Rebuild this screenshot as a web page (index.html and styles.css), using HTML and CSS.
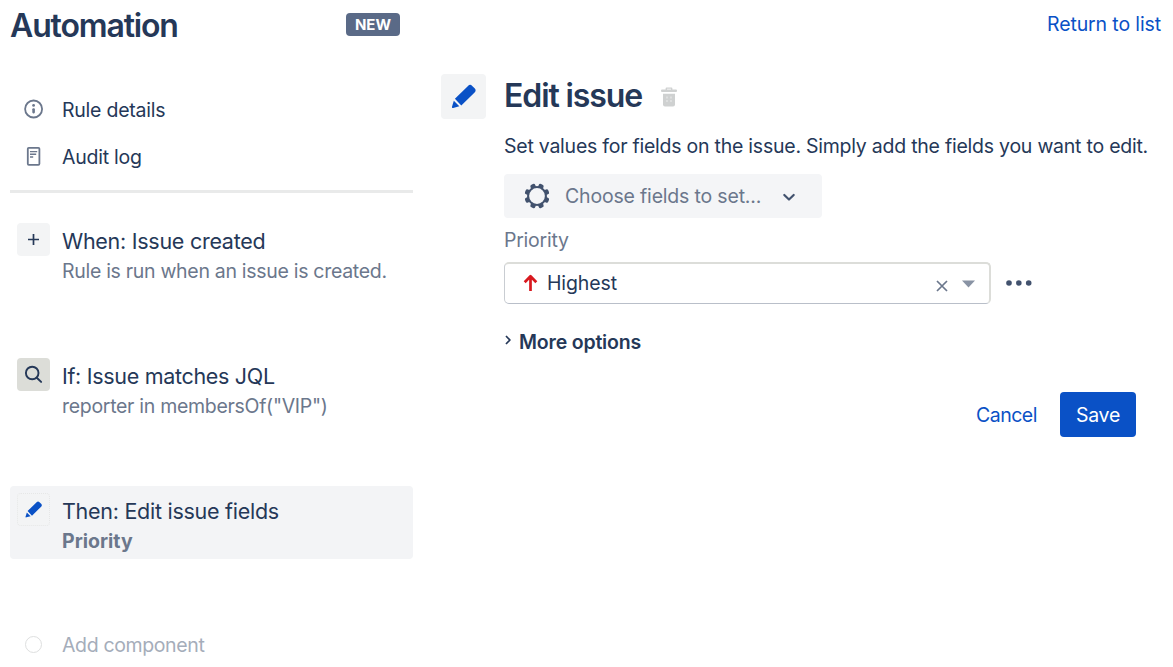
FILE: index.html
```html
<!DOCTYPE html>
<html lang="en">
<head>
<meta charset="utf-8">
<title>Automation</title>
<link rel="stylesheet" href="styles.css">
</head>
<body>
<header class="topbar">
  <h1 class="topbar-title">Automation</h1>
  <span class="badge">NEW</span>
  <a class="link topbar-link">Return to list</a>
</header>
<div class="layout">
  <aside class="sidebar">
    <nav class="nav">
      <a class="nav-item">
        <svg class="nav-icon" viewBox="0 0 24 24"><circle cx="11.6" cy="11" r="8.5" fill="none" stroke="currentColor" stroke-width="1.8"/><circle cx="11.6" cy="7.4" r="1.4" fill="currentColor"/><rect x="10.3" y="10.2" width="2.600" height="5.200" rx="1.100" fill="currentColor"/></svg>
        <span>Rule details</span>
      </a>
      <a class="nav-item">
        <svg class="nav-icon" viewBox="0 0 24 24"><rect x="5.8" y="2.8" width="11.6" height="17" rx="1" fill="none" stroke="currentColor" stroke-width="1.8"/><path d="M8 6.600h7.200M8 9.300h6.200M8 12h3.200" stroke="currentColor" stroke-width="1.400"/></svg>
        <span>Audit log</span>
      </a>
    </nav>
    <ol class="steps">
      <li class="step">
        <span class="tile"><svg viewBox="0 0 33 33"><path d="M11 16.500h11M16.500 11v11" stroke="#253858" stroke-width="1.700"/></svg></span>
        <div><div class="step-title">When: Issue created</div><div class="step-desc">Rule is run when an issue is created.</div></div>
      </li>
      <li class="step">
        <span class="tile tile-condition"><svg viewBox="0 0 33 33"><circle cx="15.200" cy="15" r="6.300" fill="none" stroke="#253858" stroke-width="1.900"/><path d="M19.800 19.800l4.300 4.100" stroke="#253858" stroke-width="2" stroke-linecap="round"/></svg></span>
        <div><div class="step-title step-title-tight">If: Issue matches JQL</div><div class="step-desc">reporter in membersOf("VIP")</div></div>
      </li>
      <li class="step step-active">
        <span class="tile tile-dotted"><svg viewBox="0 0 45 45"><use href="#pencil"/></svg></span>
        <div><div class="step-title">Then: Edit issue fields</div><div class="step-desc strong">Priority</div></div>
      </li>
    </ol>
    <a class="add"><span class="add-dot"></span><span>Add component</span></a>
  </aside>
  <main class="panel">
    <span class="tile tile-large">
      <svg viewBox="0 0 45 45"><g id="pencil" fill="#0a51c6"><path d="M13.900 24.800 27 11.900a3 3 0 0 1 4.200 0l2.400 2.300a3 3 0 0 1 0 4.200L20.300 31.400z"/><path d="M12.800 26.800 18.300 32.300l-6.100 1.600a1 1 0 0 1-1.200-1.200z"/></g></svg>
    </span>
    <div class="content">
      <div class="heading">
        <h2>Edit issue</h2>
        <svg class="trash" viewBox="0 0 16 20"><path d="M4.600 3V1.400a1 1 0 0 1 1-1h4.800a1 1 0 0 1 1 1V3h-1.400V1.800H6V3z"/><rect x="0" y="2.500" width="16" height="2.600" rx="1"/><path d="M2 6.700h12v10.800a2 2 0 0 1-2 2H4a2 2 0 0 1-2-2z"/><path d="M6 9.500v6M10 9.500v6" stroke="#eceded" stroke-width="1" stroke-dasharray="2 1.500"/></svg>
      </div>
      <p class="intro">Set values for fields on the issue. Simply add the fields you want to edit.</p>
      <button class="chooser">
        <svg class="gear" viewBox="0 0 26 26"><g fill="#42526e"><rect x="10.400" y=".4" width="5.200" height="25.200" rx="1.800" transform="rotate(22.500 13 13)"/><rect x="10.400" y=".4" width="5.200" height="25.200" rx="1.800" transform="rotate(67.500 13 13)"/><rect x="10.400" y=".4" width="5.200" height="25.200" rx="1.800" transform="rotate(112.500 13 13)"/><rect x="10.400" y=".4" width="5.200" height="25.200" rx="1.800" transform="rotate(157.500 13 13)"/><circle cx="13" cy="13" r="10"/></g><circle cx="13" cy="13" r="7.900" fill="#f4f5f7"/></svg>
        <span>Choose fields to set...</span>
        <svg class="chevron" viewBox="0 0 14 9"><path d="M2.300 2 7 6.500 11.700 2" fill="none" stroke="#42526e" stroke-width="2.200" stroke-linecap="round" stroke-linejoin="round"/></svg>
      </button>
      <label class="label">Priority</label>
      <div class="field">
        <div class="select">
          <svg class="arrow-up" viewBox="0 0 14 18"><path d="M7 17V2.500M1.200 8.200 7 2.200l5.800 6" fill="none" stroke="#d8191f" stroke-width="2.700" stroke-linejoin="round"/></svg>
          <span class="select-value">Highest</span>
          <svg class="clear" viewBox="0 0 12 12"><path d="M1 1l10 10M11 1 1 11" stroke="#6b778c" stroke-width="1.700"/></svg>
          <svg class="caret" viewBox="0 0 13 8"><path d="M0 .5h13L6.500 7.500z" fill="#8993a4"/></svg>
        </div>
        <svg class="more" viewBox="0 0 26 6"><g fill="#42526e"><circle cx="3" cy="3" r="2.800"/><circle cx="12.800" cy="3" r="2.800"/><circle cx="22.700" cy="3" r="2.800"/></g></svg>
      </div>
      <div class="options">
        <svg viewBox="0 0 6 10"><path d="M1 1l3.800 4L1 9" fill="none" stroke="#253858" stroke-width="1.700"/></svg>
        <span>More options</span>
      </div>
      <div class="actions">
        <a class="link cancel">Cancel</a>
        <button class="save">Save</button>
      </div>
    </div>
  </main>
</div>
</body>
</html>
```
FILE: styles.css
```css
* { box-sizing: border-box; }
body { margin: 0; width: 1173px; height: 667px; overflow: hidden; background: #fff; color: #253858; font: 400 19.5px/24px Inter, "Liberation Sans", sans-serif; letter-spacing: -0.24px; }
h1, h2, p, ol { margin: 0; padding: 0; }
svg { display: block; }
button { border: 0; padding: 0; font: inherit; letter-spacing: inherit; }
.link { color: #0a51c6; }
.topbar { display: flex; align-items: center; height: 48px; padding: 0 12px 0 10px; }
.topbar-title { width: 336px; padding-top: 3px; font-size: 32px; font-weight: 600; line-height: 45px; letter-spacing: -1.15px; }
.badge { width: 54px; height: 23px; border-radius: 4px; background: #5a6a87; color: #fff; font-size: 15px; font-weight: 700; line-height: 23px; text-align: center; letter-spacing: 0; }
.topbar-link { margin-left: auto; letter-spacing: -0.12px; }
.layout { display: grid; grid-template-columns: 403px 732px; column-gap: 28px; padding-left: 10px; }
.nav { display: flex; flex-direction: column; height: 145px; padding: 38px 0 0 12px; border-bottom: 3px solid #e9eaea; }
.nav-item { display: flex; align-items: center; height: 48px; gap: 16px; }
.nav-item + .nav-item { height: 46px; }
.nav-icon { width: 24px; height: 24px; margin-top: -1px; color: #6b778c; }
.steps { list-style: none; padding-top: 23px; }
.step { display: flex; gap: 12px; height: 73px; margin-bottom: 62px; padding: 7px 0 0 7px; border-radius: 4px; }
.step-active { background: #f3f4f6; margin-bottom: 0; }
.tile { flex: none; width: 33px; height: 33px; border-radius: 4px; background: #f3f4f5; }
.tile svg { width: 100%; height: 100%; }
.tile-condition { background: #dcddd8; }
.tile-dotted { border: 1px dotted #e6e7e7; }
.step-title { padding-top: 3px; font-size: 21.5px; line-height: 30px; letter-spacing: -0.27px; }
.step-title-tight { letter-spacing: -0.31px; }
.step-desc { color: #6b778c; line-height: 30px; letter-spacing: -0.3px; }
.strong { font-weight: 700; letter-spacing: 0; }
.add { display: flex; align-items: center; gap: 20px; margin-top: 74px; padding-left: 15px; color: #a5adba; letter-spacing: -0.36px; }
.add-dot { width: 17px; height: 17px; margin-top: -1px; border: 1.5px solid #dedfdf; border-radius: 50%; }
.panel { display: flex; gap: 18px; padding-top: 26px; }
.tile-large { width: 45px; height: 45px; }
.content { width: 669px; }
.heading { display: flex; align-items: center; gap: 19px; height: 43px; }
.heading h2 { font-size: 32px; font-weight: 600; letter-spacing: -1.1px; }
.trash { width: 16px; height: 20px; margin-top: 3px; fill: #cfd1d1; }
.intro { margin-top: 17px; white-space: nowrap; }
.chooser { display: flex; align-items: center; width: 318px; height: 44px; margin-top: 16px; padding-left: 20px; border-radius: 4px; background: #f4f5f7; color: #6b778c; letter-spacing: -0.18px; }
.gear { width: 26px; height: 26px; margin-right: 15px; }
.chevron { width: 14px; height: 9px; margin: 2px 26px 0 auto; }
.label { display: block; margin-top: 10px; color: #6b778c; }
.field { display: flex; align-items: center; gap: 15px; margin-top: 10px; }
.select { display: flex; align-items: center; width: 487px; height: 42px; padding: 0 14px 1px 18px; border: 2px solid #dcddd9; border-bottom: 1px solid #b9bfc9; border-left: 1px solid #c9cdd2; border-radius: 5px; letter-spacing: -0.12px; }
.arrow-up { width: 15px; height: 18px; margin-right: 9px; }
.clear { width: 12px; height: 12px; margin: 6px 14px 0 auto; }
.caret { width: 13px; height: 8px; margin-top: 1px; }
.more { width: 26px; height: 6px; }
.options { display: flex; align-items: center; gap: 8px; margin-top: 26px; padding-left: 1px; font-weight: 600; letter-spacing: -0.18px; }
.options svg { width: 6px; height: 10px; margin-top: -4px; }
.actions { display: flex; align-items: center; justify-content: flex-end; gap: 22px; margin-top: 38px; padding-right: 37px; }
.cancel { letter-spacing: -0.48px; margin-right: 1px; }
.save { width: 76px; height: 45px; border-radius: 4px; background: #0a51c6; color: #fff; }
```
